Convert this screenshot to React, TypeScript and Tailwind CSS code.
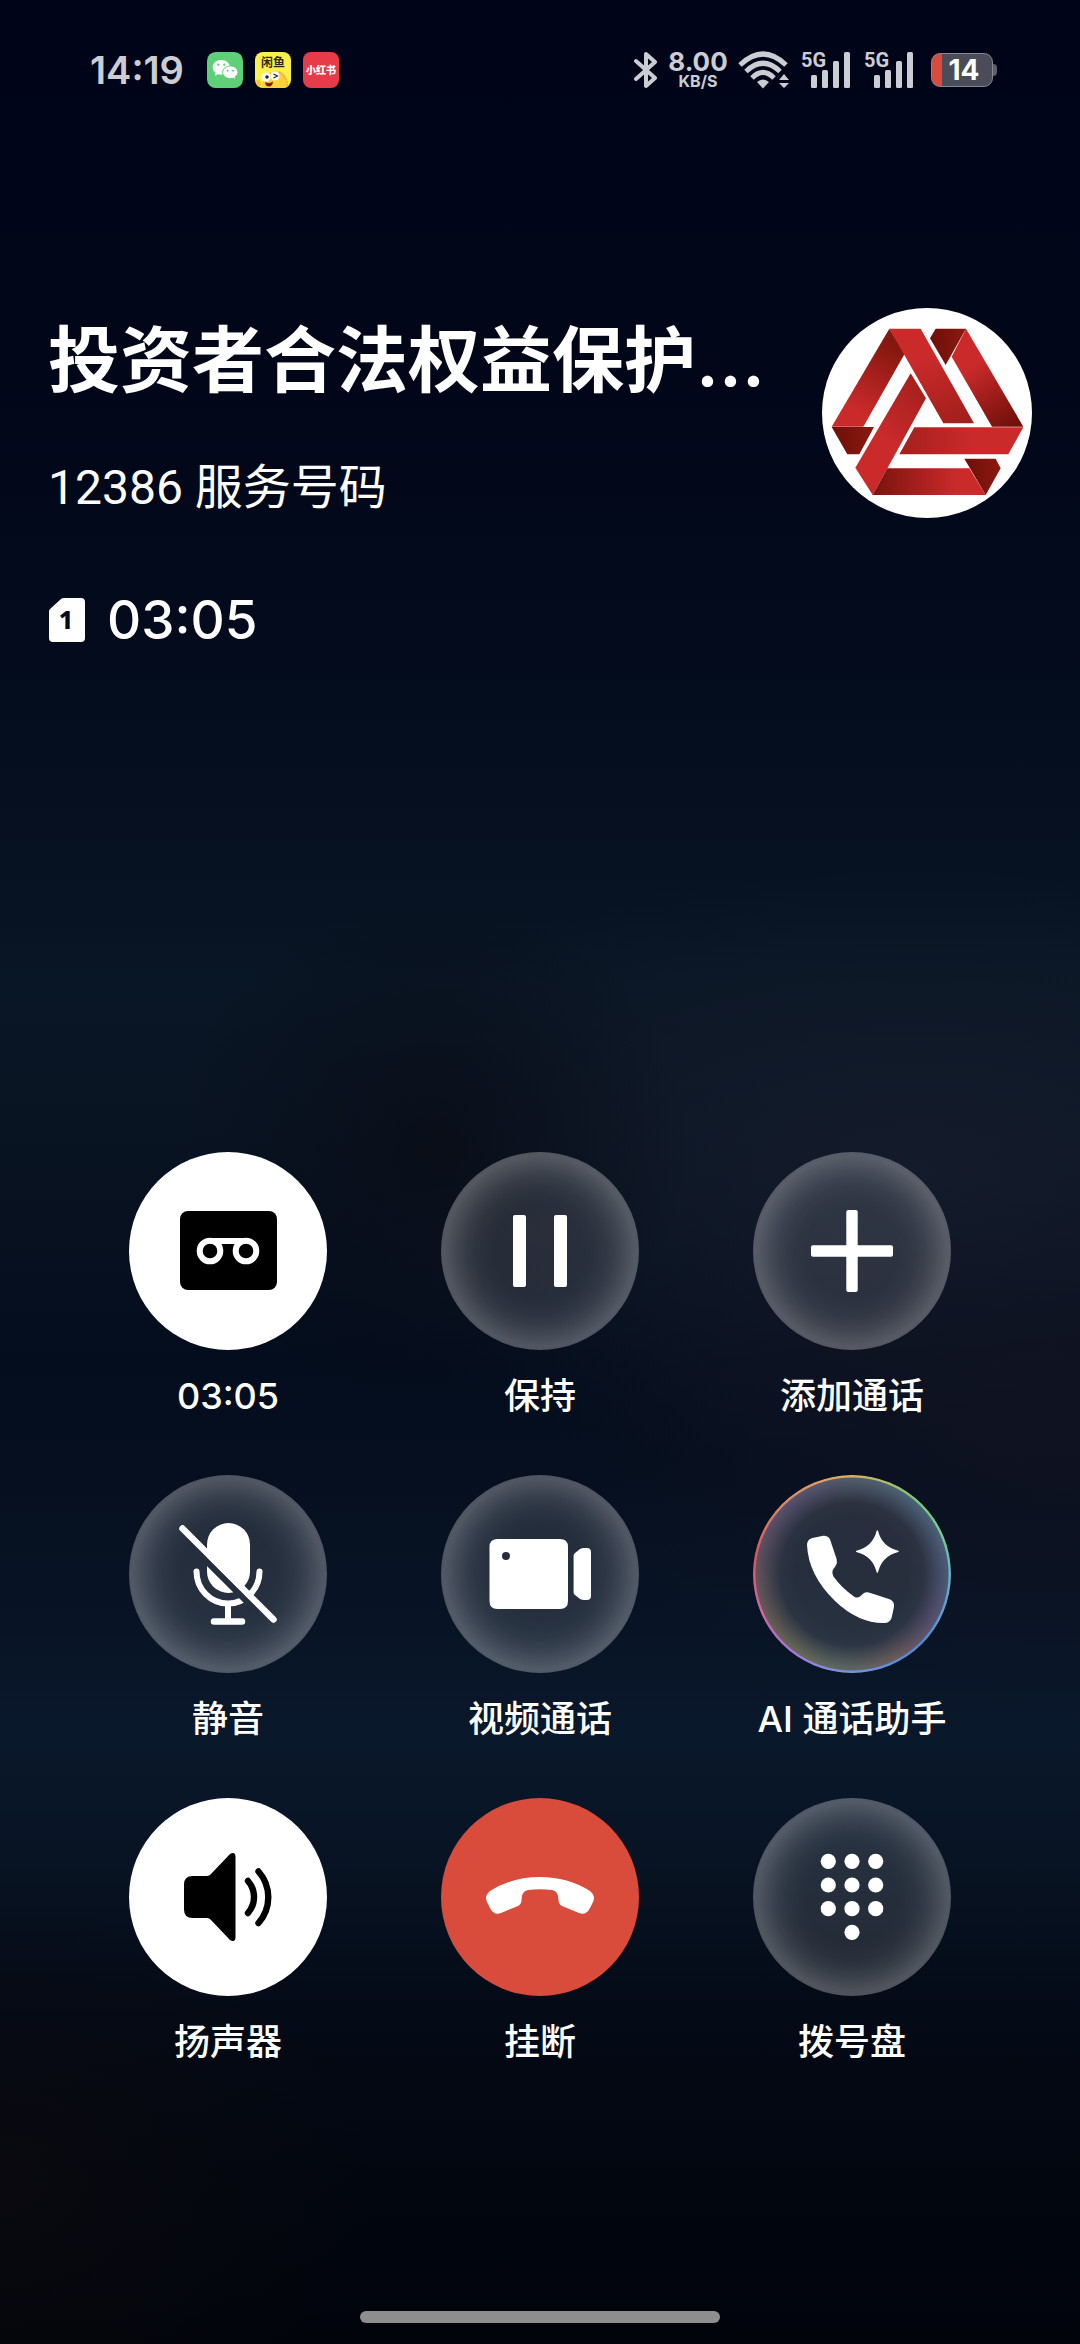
import React from "react";

const Glass = "bg-white/12 border-2 border-white/20 shadow-[inset_0_0_48px_rgba(255,255,255,0.4)]";

const WeChatIcon = () => (
  <svg viewBox="0 0 108 108" className="size-9">
    <rect width="108" height="108" rx="26" fill="#5fd077" />
    <path d="M43 24c-15 0-26 9.500-26 21.500 0 7 3.500 12.500 9 16.500l-2 9 9-4.500c3 .8 6.500 1.300 10 1.300 14 0 26-9.500 26-22S57 24 43 24Z" fill="#fff" />
    <path d="M70 42c-12.500 0-23 8-23 19s10.500 19 23 19c3 0 5.500-.4 8-1l8 4-2-8c5-3.500 9-8 9-14 0-11-10.500-19-23-19Z" fill="#fff" stroke="#5fd077" strokeWidth="3" />
    <g fill="#5fd077">
      <circle cx="34" cy="38" r="3.500" />
      <circle cx="52" cy="38" r="3.500" />
      <circle cx="62" cy="56" r="3" />
      <circle cx="78" cy="56" r="3" />
    </g>
  </svg>
);

const XianyuIcon = () => (
  <svg viewBox="0 0 36 36" className="size-9">
    <defs>
      <clipPath id="fish">
        <rect width="36" height="36" rx="8" />
      </clipPath>
    </defs>
    <g clipPath="url(#fish)">
      <rect width="36" height="36" fill="#fdf04a" />
      <path d="M7 36c0-10 5-17 14-17s12 7 12 17Z" fill="#fbd13c" />
      <path d="M24 20q8 5 9 16" fill="none" stroke="#f3b52c" strokeWidth="2" strokeDasharray="2 1" />
      <path d="M1 28q4-2 5 3t-4 3Z" fill="#fbc832" />
      <circle cx="11" cy="25" r="4.500" fill="#fff" />
      <circle cx="20" cy="24" r="4.500" fill="#fff" />
      <circle cx="12" cy="25" r="1.800" fill="#222" />
      <path d="m18.500 22 4 2-4 2" fill="none" stroke="#222" strokeWidth="1.200" />
      <path d="M10 30q5 2 8-.5-.5 5-4 5t-4-4.500Z" fill="#7c1f14" />
      <text x="6" y="15" fontSize="12" fontWeight="700" fill="#2b2a12" fontFamily="Noto Sans CJK SC, sans-serif">闲鱼</text>
    </g>
  </svg>
);

const RedBookIcon = () => (
  <svg viewBox="0 0 36 36" className="size-9">
    <rect width="36" height="36" rx="8" fill="#e83b49" />
    <text x="18" y="22" textAnchor="middle" fontSize="10" fontWeight="900" fill="#fff" fontFamily="Noto Sans CJK SC, sans-serif">小红书</text>
  </svg>
);

const Signal = () => (
  <svg viewBox="0 0 48 38" className="h-[38px] w-12 overflow-visible" fill="#cccdd3">
    <text x="-1" y="16" fontSize="20" fontWeight="700" fontFamily="Roboto, sans-serif">5G</text>
    <rect x="9" y="24" width="6" height="13" rx="1.500" />
    <rect x="20" y="19" width="6" height="18" rx="1.500" />
    <rect x="31" y="10" width="6" height="27" rx="1.500" />
    <rect x="42" y="1" width="6" height="36" rx="1.500" />
  </svg>
);

const StatusBar = () => (
  <div className="flex h-[140px] items-center pl-[90px] pr-[83px] text-[#cccdd3]">
    <span className="w-[117px] text-[38px] leading-10 font-semibold">14:19</span>
    <div className="flex gap-3">
      <WeChatIcon />
      <XianyuIcon />
      <RedBookIcon />
    </div>
    <div className="ml-auto flex items-center">
      <svg viewBox="0 0 24 38" className="h-[38px] w-6" fill="none" stroke="#cccdd3" strokeWidth="4" strokeLinejoin="round" strokeLinecap="round">
        <path d="M2 10 21 27 12 35V3l9 8L2 28" />
      </svg>
      <div className="ml-2 w-[64px] text-center font-bold">
        <div className="text-[26px] leading-[22px]">8.00</div>
        <div className="text-[16px] leading-4">KB/S</div>
      </div>
      <svg viewBox="0 0 52 38" className="ml-2 h-[38px] w-[52px]" fill="none" stroke="#cccdd3" strokeWidth="5">
        <path d="M2 14Q25-8 48 14" />
        <path d="M8 20.500Q25 4 42 20.500" />
        <path d="M14 27Q25 16 36 27" />
        <path d="M19 31q6-5 12 0l-6 6.500Z" fill="#cccdd3" stroke="none" />
        <path d="m46 23 5 6H41Zm0 14 5-5H41Z" fill="#cccdd3" stroke="none" />
      </svg>
      <div className="ml-3 flex gap-[15px]">
        <Signal />
        <Signal />
      </div>
      <div className="ml-[18px] flex items-center">
        <div className="flex h-[34px] w-[62px] items-center justify-center rounded-[9px] border border-[#85878f] bg-[linear-gradient(90deg,#d94b3d_16%,#4a4d59_16%)] pl-1 text-[28px] leading-8 font-bold text-white">
          14
        </div>
        <div className="h-3 w-1 rounded-r-sm bg-[#5d606b]"></div>
      </div>
    </div>
  </div>
);

const Avatar = () => (
  <svg viewBox="66 54 630 630" className="size-[210px] shrink-0">
    <defs>
      <linearGradient id="left" x1="0.7" y1="0" x2="0.3" y2="1">
        <stop offset="0.1" stopColor="#84170f" />
        <stop offset="0.85" stopColor="#cb2a2b" />
      </linearGradient>
      <linearGradient id="center" x1="0.3" y1="0" x2="0.7" y2="1">
        <stop offset="0.3" stopColor="#cb2a2b" />
        <stop offset="1" stopColor="#a3201c" />
      </linearGradient>
      <linearGradient id="right" x1="0.3" y1="0" x2="0.8" y2="1">
        <stop offset="0.3" stopColor="#cb2a2b" />
        <stop offset="1" stopColor="#72100a" />
      </linearGradient>
      <linearGradient id="cross" x1="0.8" y1="0" x2="0.3" y2="1">
        <stop offset="0" stopColor="#a3201c" />
        <stop offset="0.6" stopColor="#cb2a2b" />
      </linearGradient>
      <linearGradient id="middle">
        <stop offset="0" stopColor="#a3201c" />
        <stop offset="0.6" stopColor="#cb2a2b" />
      </linearGradient>
      <linearGradient id="bottom">
        <stop offset="0" stopColor="#7a130c" />
        <stop offset="0.75" stopColor="#cb2a2b" />
      </linearGradient>
      <linearGradient id="fold">
        <stop offset="0" stopColor="#6d0f08" />
        <stop offset="1" stopColor="#8b1911" />
      </linearGradient>
    </defs>
    <circle cx="381" cy="369" r="315" fill="#fff" />
    <path d="M268 116 315 190 190 410H95Z" fill="url(#left)" />
    <path d="M268 116H362L522 400H430Z" fill="url(#center)" />
    <path d="M407 116H498L437 225 390 145Z" fill="url(#fold)" />
    <path d="M498 116 670 410H576L455 200Z" fill="url(#right)" />
    <path d="M95 411H222L178 493H142Z" fill="url(#fold)" />
    <path d="M332 250 378 325 218 615 166 533Z" fill="url(#cross)" />
    <path d="M343 412H670L625 493H298Z" fill="url(#middle)" />
    <path d="M262 535H508L557 615H218Z" fill="url(#bottom)" />
    <path d="M493 506H587L602 535 557 615Z" fill="url(#fold)" />
  </svg>
);

const CallerInfo = () => (
  <header className="mt-[168px] flex items-start justify-between px-12 text-white">
    <div className="min-w-0">
      <h1 className="truncate text-[72px] leading-[104px] font-semibold">投资者合法权益保护...</h1>
      <p className="mt-12 font-[Roboto,'Noto_Sans_CJK_SC',sans-serif] text-5xl leading-14">12386 服务号码</p>
      <div className="mt-[72px] flex items-center gap-[22px] pl-px">
        <svg viewBox="0 0 36 44" className="h-11 w-9">
          <path d="M12 1Q13 0 15 0H32Q36 0 36 4V40Q36 44 32 44H4Q0 44 0 40V14Q0 12 1 11Z" fill="#fff" />
          <text x="17" y="31" textAnchor="middle" fontSize="25" fontWeight="800" fill="#050b1a" fontFamily="Noto Sans, sans-serif">1</text>
        </svg>
        <span className="text-[53px] leading-16 font-medium">03:05</span>
      </div>
    </div>
    <Avatar />
  </header>
);

const TapeIcon = () => (
  <svg viewBox="0 0 198 198">
    <rect x="51" y="59" width="97" height="79" rx="8" fill="#000" />
    <g fill="none" stroke="#fff" strokeWidth="6">
      <circle cx="81" cy="99" r="10.300" />
      <circle cx="117" cy="99" r="10.300" />
      <path d="M81 89h36" />
    </g>
  </svg>
);

const PauseIcon = () => (
  <svg viewBox="0 0 198 198" fill="#fff">
    <rect x="72" y="63" width="13" height="72" rx="2" />
    <rect x="113" y="63" width="13" height="72" rx="2" />
  </svg>
);

const PlusIcon = () => (
  <svg viewBox="0 0 198 198" fill="#fff">
    <rect x="58" y="93.300" width="82" height="11.400" rx="2" />
    <rect x="93.300" y="58" width="11.400" height="82" rx="2" />
  </svg>
);

const MuteIcon = () => (
  <svg viewBox="0 0 198 198" fill="none" stroke="#fff" strokeWidth="6" strokeLinecap="round">
    <mask id="gap" maskUnits="userSpaceOnUse" x="0" y="0" width="198" height="198">
      <rect width="198" height="198" fill="#fff" stroke="none" />
      <path d="M50 58.700 138 146.700" stroke="#000" strokeWidth="6.200" />
    </mask>
    <g mask="url(#gap)">
      <rect x="78" y="48" width="43" height="70" rx="21.500" fill="#fff" stroke="none" />
      <path d="M67.500 96.500A31.500 32 0 0 0 130.500 96.500" />
    </g>
    <path d="M99 129v17" strokeLinecap="butt" />
    <path d="M85 146.500h28M53.500 53.500l91 91" strokeWidth="6.500" />
  </svg>
);

const VideoIcon = () => (
  <svg viewBox="0 0 198 198" fill="#fff">
    <path fillRule="evenodd" d="M56.500 64H119q8 0 8 8v54q0 8-8 8H56.500q-8 0-8-8V72q0-8 8-8ZM65 77a4 4 0 1 0 0 8 4 4 0 0 0 0-8Z" />
    <path d="M134 78l5-4q2-1 4-1h3q4 0 4 4v44q0 4-4 4h-3q-2 0-4-1l-5-4q-1.400-1-1.400-2.500V80.500q0-1.500 1.400-2.500Z" />
  </svg>
);

const AssistantIcon = () => (
  <svg viewBox="39 45 594 594" fill="#fff">
    <path d="M217 234 250 227Q264 226 270 238L290 298Q293 309 287 317L278 331Q275 341 280 349 305 385 344 411 352 415 361 409L369 401Q378 395 389 398L449 418Q464 425 462 440L455 473Q449 489 433 489 355 490 285 423 205 345 201 255 201 239 217 234Z" />
    <path d="M410 212q2-3 4 0Q426 260 475 272q3 2 0 4-49 12-61 61-2 3-4 0-12-49-61-61-3-2 0-4 49-12 61-60Z" />
  </svg>
);

const SpeakerIcon = () => (
  <svg viewBox="0 0 198 198">
    <path d="M63.500 78H78q2.500 0 4-2L101 56q5.500-3 5.500 3v80q0 6-5.500 3L82 122q-1.500-2-4-2H63.500q-8.500 0-8.500-8.500v-25q0-8.500 8.500-8.500Z" />
    <path d="M119 83a24.300 24.300 0 0 1 0 32M129.500 73.500a38.800 38.800 0 0 1 0 51.500" fill="none" stroke="#000" strokeWidth="6.400" strokeLinecap="round" />
  </svg>
);

const HangUpIcon = () => (
  <svg viewBox="0 0 198 198" fill="#fff">
    <path d="M49 93Q71 79 99 79T149 93Q155 98 152 104L149 110Q145 118 138 115L121 108Q117.500 106 117.500 102 117.500 93 111 92 99 90.500 87 92 80.500 93 80.500 102 80.500 106 77 108L60 115Q53 118 49 110L46 104Q43 98 49 93Z" />
  </svg>
);

const dots = [63.3, 87, 110.7];

const DialpadIcon = () => (
  <svg viewBox="0 0 198 198" fill="#fff">
    {dots.map((y) =>
      [75.3, 99, 122.7].map((x) => <circle key={`${x}-${y}`} cx={x} cy={y} r="7.600" />)
    )}
    <circle cx="99" cy="134.300" r="7.600" />
  </svg>
);

// inner glow and rim of the assistant button
const Rainbow = () => (
  <>
    <span className="absolute inset-0 rounded-full opacity-45 bg-[conic-gradient(#6d8494,#5f8fb4_12%,#5f78b0_25%,#85609c_34%,#b07860_42%,#8a9a78_52%,#a89a58_60%,#a87858_68%,#906070_78%,#7d62a0_88%,#6d8494)] [mask:radial-gradient(closest-side,transparent_72%,black_100%)]"></span>
    <span className="absolute inset-0 rounded-full bg-[conic-gradient(#e0b060,#6fce74_12%,#6fd08a_18%,#5fb4cc_26%,#4f86dc_38%,#6f96e8_50%,#b06fd8_62%,#d8609c_70%,#dc5560_78%,#e08a5c_88%,#e0b060)] [mask:radial-gradient(closest-side,transparent_97%,black_98%)]"></span>
  </>
);

const actions = [
  { label: "03:05", icon: <TapeIcon />, style: "bg-white" },
  { label: "保持", icon: <PauseIcon />, style: Glass },
  { label: "添加通话", icon: <PlusIcon />, style: Glass },
  { label: "静音", icon: <MuteIcon />, style: Glass },
  { label: "视频通话", icon: <VideoIcon />, style: Glass },
  { label: "AI 通话助手", icon: <AssistantIcon />, style: "bg-white/12 shadow-[inset_0_0_44px_rgba(255,255,255,0.24)]", rainbow: true },
  { label: "扬声器", icon: <SpeakerIcon />, style: "bg-white" },
  { label: "挂断", icon: <HangUpIcon />, style: "bg-[#d94b3b]" },
  { label: "拨号盘", icon: <DialpadIcon />, style: Glass },
];

export default function App() {
  return (
    <div className="flex min-h-screen flex-col bg-[#02050d] bg-[radial-gradient(ellipse_24%_11%_at_40%_49%,rgba(8,11,20,0.7),transparent),radial-gradient(ellipse_50%_12%_at_100%_61%,rgba(19,19,33,0.7),transparent),radial-gradient(ellipse_60%_13%_at_85%_50%,rgba(22,29,45,0.85),transparent),radial-gradient(ellipse_35%_12%_at_0%_93%,rgba(11,10,15,0.8),transparent),linear-gradient(180deg,#000418_0%,#010619_15%,#030b1c_27%,#061121_37%,#091625_42%,#091423_48%,#040d1d_58%,#050f1f_63%,#0a182b_74%,#081424_79%,#040a16_86%,#02060f_93%,#01040b_100%)] font-[Inter,'Noto_Sans_CJK_SC',sans-serif]">
      <StatusBar />
      <CallerInfo />
      <main className="mt-auto grid grid-cols-3 gap-y-[55px] px-18">
        {actions.map((action, index) => (
          <button key={index} className="flex flex-col items-center">
            <span className={`relative flex size-[198px] rounded-full ${action.style}`}>
              {action.rainbow && <Rainbow />}
              {/* the glass border is 2px, so the icon box reaches over it */}
              <span className={action.style === Glass ? "absolute -inset-0.5" : "absolute inset-0"}>{action.icon}</span>
            </span>
            <span className="mt-[22px] text-4xl leading-12 font-medium text-white">{action.label}</span>
          </button>
        ))}
      </main>
      <footer className="flex justify-center pt-[245px] pb-[21px]">
        <div className="h-3 w-1/3 rounded-full bg-[#8e8e8f]"></div>
      </footer>
    </div>
  );
}
